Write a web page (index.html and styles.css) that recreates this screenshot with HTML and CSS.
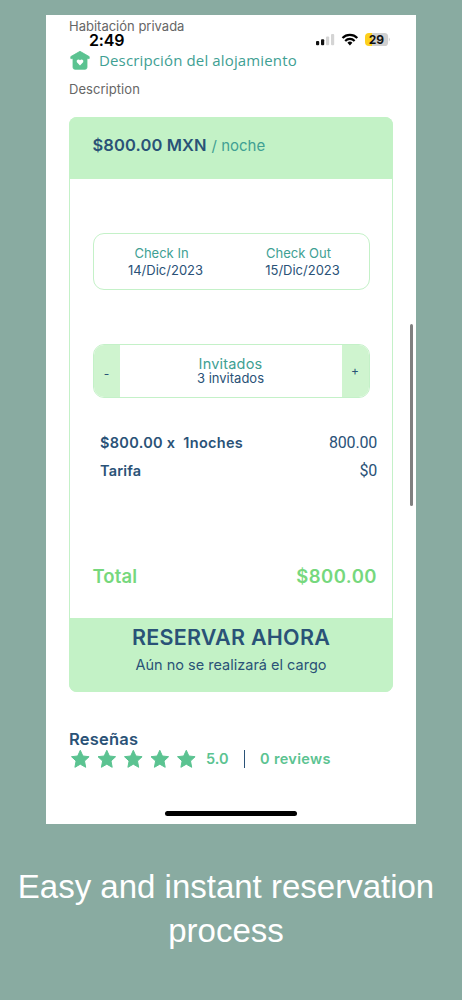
FILE: index.html
```html
<!DOCTYPE html>
<html lang="es">
<head>
<meta charset="utf-8">
<title>Reservation</title>
<link rel="stylesheet" href="styles.css">
</head>
<body>
<main class="screen">
  <div class="status">
    <span class="clock">2:49</span>
    <svg class="status-icons" width="76" height="16" viewBox="0 0 76 16">
      <rect x="2" y="9" width="3.2" height="4.300" rx="1" fill="#111"/>
      <rect x="7" y="7.300" width="3.200" height="6" rx="1" fill="#111"/>
      <rect x="12" y="4.600" width="3.200" height="8.700" rx="1" fill="#d4d4d4"/>
      <rect x="17" y="2" width="3.200" height="11.300" rx="1" fill="#d4d4d4"/>
      <g fill="none" stroke="#000" stroke-width="2.200">
        <path d="M28.500 6a10.400 10.400 0 0 1 14.800 0"/>
        <path d="M31.200 8.900a6.600 6.600 0 0 1 9.400 0"/>
      </g>
      <path d="M35.900 13.400l-2.500-2.600a3.600 3.600 0 0 1 5 0z" fill="#000"/>
      <path d="M54.500 1H70.500a3.600 3.600 0 0 1 3.600 3.600v5.800A3.600 3.600 0 0 1 70.500 14H54.500z" fill="#d0d0d0"/>
      <path d="M58 1H55a4 4 0 0 0-4 4v5a4 4 0 0 0 4 4h3z" fill="#fdd01c"/>
      <path d="M74.900 5.500q2 2 0 4z" fill="#d0d0d0"/>
      <text class="battery-level" x="62.500" y="11.700" text-anchor="middle">29</text>
    </svg>
  </div>

  <p class="room">Habitación privada</p>
  <div class="about">
    <svg width="20" height="20" viewBox="0 0 20 20">
      <path d="M10 1.300 19.200 6.600V8.600H17V17.300a2 2 0 0 1-2 2H5a2 2 0 0 1-2-2V8.600H.8V6.600z" fill="#5bc391" stroke="#5bc391" stroke-width=".8" stroke-linejoin="round"/>
      <path d="M10 15.400 6.900 12.200a1.850 1.850 0 0 1 3.100-2 1.850 1.850 0 0 1 3.100 2z" fill="#fff"/>
    </svg>
    <h2 class="about-title">Descripción del alojamiento</h2>
  </div>
  <p class="description">Description</p>

  <section class="card">
    <header class="rate"><b class="rate-price">$800.00 MXN</b><span class="rate-unit">/ noche</span></header>
    <div class="dates">
      <div class="date"><span class="label">Check In</span><span class="day">14/Dic/2023</span></div>
      <div class="date"><span class="label">Check Out</span><span class="day">15/Dic/2023</span></div>
    </div>
    <div class="guests">
      <span class="step minus">-</span>
      <div class="guest-info"><span class="guest-label">Invitados</span><span class="guest-count">3 invitados</span></div>
      <span class="step plus">+</span>
    </div>
    <div class="line"><b class="nights">$800.00 x&nbsp; 1noches</b><span class="amount">800.00</span></div>
    <div class="line fee"><b class="fee-name">Tarifa</b><span class="amount">$0</span></div>
    <div class="total"><b class="total-name">Total</b><b class="total-value">$800.00</b></div>
    <footer class="reserve"><b class="reserve-title">RESERVAR AHORA</b><span class="reserve-note">Aún no se realizará el cargo</span></footer>
  </section>

  <h3 class="reviews-title">Reseñas</h3>
  <div class="reviews">
    <svg width="128" height="20" viewBox="0 0 128 20" fill="#5bc391" stroke="#5bc391" stroke-width="1" stroke-linejoin="round">
      <defs><path id="star" d="M11.300 1.300 13.900 7 20.100 7.700 15.500 12 16.700 18.300 11.300 15.200 5.900 18.300 7.100 12 2.500 7.700 8.700 7z"/></defs>
      <use href="#star"/><use href="#star" x="26.500"/><use href="#star" x="53"/><use href="#star" x="79.500"/><use href="#star" x="106"/>
    </svg>
    <span class="score">5.0</span>
    <i class="divider"></i>
    <span class="review-count">0 reviews</span>
  </div>
  <i class="scrollbar"></i>
  <i class="home-bar"></i>
</main>
<h1 class="caption">Easy and instant reservation<br>process</h1>
</body>
</html>
```
FILE: styles.css
```css
* { box-sizing: border-box; }
body {
  margin: 0;
  padding-top: 15px;
  height: 1000px;
  overflow: hidden;
  background: #89aba1;
  font-family: Inter, "Liberation Sans", sans-serif;
  color: #2a5277;
}
p, h1, h2, h3 { margin: 0; font-weight: 400; }
b { font-weight: 600; }
span, b, p, h1, h2, h3 { white-space: nowrap; }

.screen {
  position: relative;
  width: 370px;
  height: 809px;
  margin-left: 46px;
  padding: 0 23px;
  background: #fff;
}
.status {
  position: absolute;
  top: 17px;
  left: 43px;
  right: 25px;
  display: flex;
  justify-content: space-between;
}
.clock { font-size: 16px; line-height: 17px; font-weight: 600; letter-spacing: -.2px; color: #000; }
.status-icons { margin-right: 1px; }
.battery-level { font: 700 12px Inter, sans-serif; fill: #111; }

.room { font-size: 13px; line-height: 23px; color: #666; }
.about { display: flex; align-items: center; gap: 9px; height: 44px; padding-left: 1px; }
.about-title { font: 400 15px/20px "Open Sans", "Noto Sans", sans-serif; letter-spacing: .14px; color: #40a093; }
.description { font-size: 13px; line-height: 15px; letter-spacing: .05px; color: #666; }

.card {
  display: flex;
  flex-direction: column;
  width: 324px;
  height: 575px;
  margin-top: 20px;
  border-radius: 8px;
  overflow: hidden;
  box-shadow: inset 0 0 0 1px #c4f1c8;
}
.rate { display: flex; gap: 5px; height: 62px; padding: 18px 23.5px; background: #c3f2c6; line-height: 20px; }
.rate-price { font-size: 16.5px; letter-spacing: .1px; }
.rate-unit { font-size: 15px; line-height: 21px; color: #40a093; }
.dates {
  display: grid;
  grid-template-columns: 1fr 1fr;
  width: 277px;
  height: 57px;
  margin: 54px 0 0 23.5px;
  padding: 10px 1px 0 0;
  border: 1px solid #c4f1c8;
  border-radius: 11px;
}
.date { display: flex; flex-direction: column; text-align: center; font-size: 13px; }
.label { line-height: 18px; padding-right: 1px; color: #40a093; }
.day { line-height: 17px; padding-left: 7px; }
.guests {
  display: grid;
  grid-template-columns: 26px 1fr 27px;
  width: 277px;
  height: 54px;
  margin: 54px 0 0 23.5px;
  border: 1px solid #c4f1c8;
  border-radius: 11px;
  overflow: hidden;
}
.step { background: #cff4cf; text-align: center; font-size: 12px; }
.minus { line-height: 58px; }
.plus { line-height: 52px; }
.guest-info { display: flex; flex-direction: column; padding-top: 12px; text-align: center; }
.guest-label { font-size: 14.5px; line-height: 14px; letter-spacing: .2px; color: #40a093; }
.guest-count { font-size: 13px; line-height: 15px; }
.line { display: flex; justify-content: space-between; margin-top: 30px; padding: 0 16px 0 31px; font-size: 14.5px; line-height: 29px; letter-spacing: .3px; }
.fee { margin-top: 0; line-height: 28px; }
.fee-name { letter-spacing: .15px; }
.amount { font-family: Roboto, sans-serif; font-size: 16px; letter-spacing: -.2px; }
.total { display: flex; justify-content: space-between; margin-top: 77px; padding: 0 16px 0 23.5px; font-size: 18.5px; line-height: 29px; color: #76d87d; }
.total-name { letter-spacing: .1px; }
.total-value { letter-spacing: .45px; }
.reserve { display: flex; flex-direction: column; height: 74px; margin-top: auto; padding-top: 6px; background: #c3f2c6; text-align: center; }
.reserve-title { font-size: 21.5px; line-height: 26px; letter-spacing: .25px; }
.reserve-note { font-size: 14.5px; line-height: 30px; }

.reviews-title { margin-top: 37px; font-size: 16.5px; line-height: 20px; font-weight: 600; letter-spacing: .2px; }
.reviews { display: flex; align-items: center; height: 20px; color: #5bc391; font-size: 14.5px; line-height: 18px; font-weight: 600; }
.score { margin: -1px 0 0 9px; width: 38px; }
.divider { width: 1px; height: 18px; background: #2a5277; }
.review-count { margin: -1px 0 0 15px; letter-spacing: .35px; }
.scrollbar { position: absolute; top: 309px; right: 3px; width: 3px; height: 182px; border-radius: 2px; background: #808080; }
.home-bar { position: absolute; left: 119px; bottom: 8px; width: 132px; height: 5px; border-radius: 3px; background: #000; }
.caption {
  width: 452px;
  margin-top: 41px;
  font: 400 33px/43.5px "Liberation Sans", Arial, sans-serif;
  color: #fff;
  text-align: center;
}
```
